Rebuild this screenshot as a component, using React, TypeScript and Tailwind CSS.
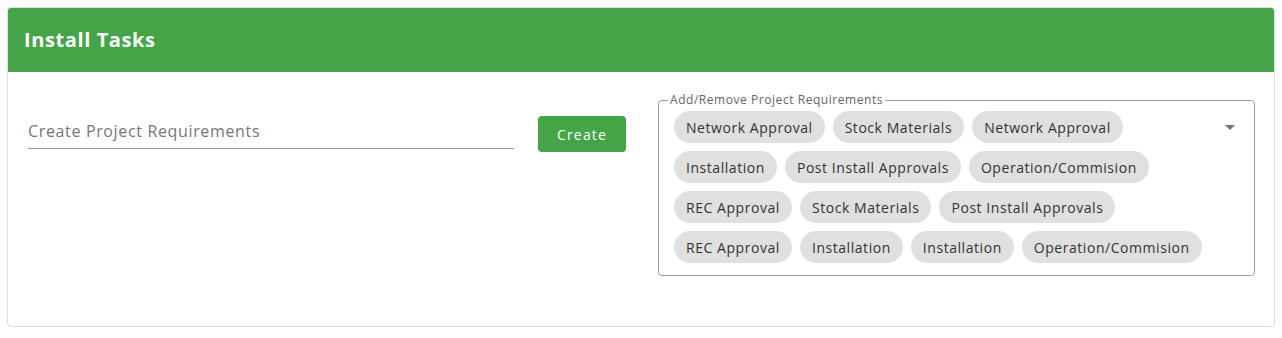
const rows: string[][] = [
  ['Network Approval', 'Stock Materials', 'Network Approval'],
  ['Installation', 'Post Install Approvals', 'Operation/Commision'],
  ['REC Approval', 'Stock Materials', 'Post Install Approvals'],
  ['REC Approval', 'Installation', 'Installation', 'Operation/Commision'],
];

function Chip({ label }: { label: string }) {
  return (
    <span className="h-8 px-3 rounded-full bg-[#e0e0e0] text-[14px] tracking-[0.55px] text-[#333] flex items-center whitespace-nowrap">
      {label}
    </span>
  );
}

export default function App() {
  return (
    <div className="bg-white min-h-screen pt-[7px] px-[7px]" style={{ fontFamily: '"Open Sans", sans-serif' }}>
      <div className="border border-[#e0e0e0] rounded-[4px] overflow-hidden h-[320px]">
        <div className="bg-[#43a547] h-16 px-4 flex items-center">
          <h1 className="text-white text-[20px] tracking-[0.6px] font-bold">Install Tasks</h1>
        </div>

        <div className="grid grid-cols-[598px_1fr] gap-8 pl-5 pr-[19px] pt-[19px]">
          <div className="flex items-start gap-6 pt-[23px]">
            <input
              placeholder="Create Project Requirements"
              className="flex-1 h-[35px] border-b border-[#949494] text-[16px] tracking-[0.65px] text-[#333] placeholder:text-[#777] outline-none"
            />
            <button className="mt-[2px] w-[88px] h-9 rounded-[4px] bg-[#43a547] text-white text-[14px] tracking-[1.2px]">
              Create
            </button>
          </div>

          <fieldset className="border border-[#9e9e9e] rounded-[4px] pl-[15px] pr-3 pb-[12px] pt-[2px] min-w-0">
            <legend className="ml-[-6px] px-[2px] text-[12px] tracking-[0.55px] text-[#666]">Add/Remove Project Requirements</legend>
            <div className="flex items-start">
              <div className="flex-1 flex flex-col gap-2">
                {rows.map((row, i) => (
                  <div key={i} className="flex gap-2">
                    {row.map((label, j) => (
                      <Chip key={j} label={label} />
                    ))}
                  </div>
                ))}
              </div>
              <svg width="24" height="24" viewBox="0 0 24 24" className="mt-1 text-[#757575]" fill="currentColor">
                <path d="M7 10l5 5 5-5z" />
              </svg>
            </div>
          </fieldset>
        </div>
      </div>
    </div>
  );
}
